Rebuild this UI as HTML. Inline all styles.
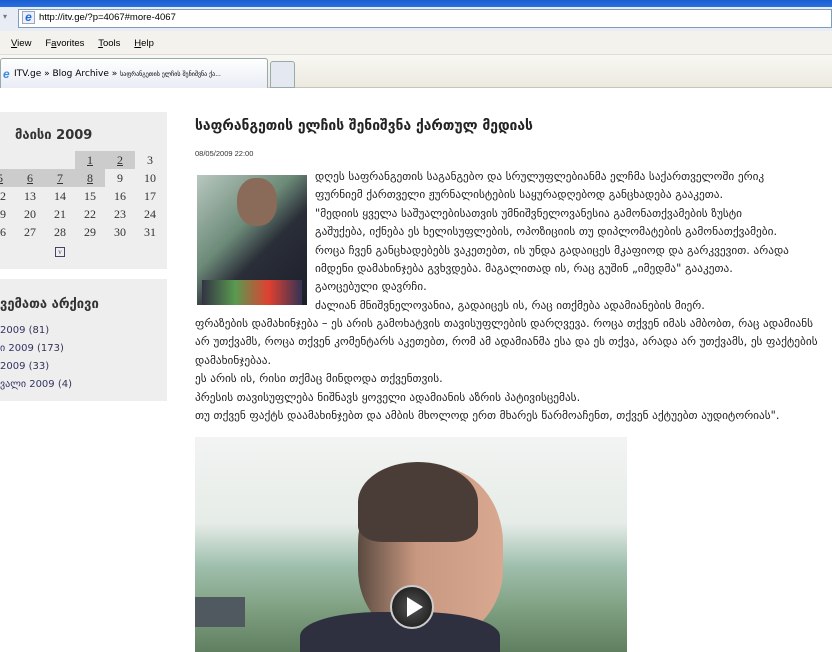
<!DOCTYPE html>
<html><head><meta charset="utf-8"><style>
*{margin:0;padding:0;box-sizing:border-box}
body{width:832px;height:652px;overflow:hidden;background:#fff;font-family:"Liberation Sans","DejaVu Sans",sans-serif;position:relative}
.abs{position:absolute}
.geo{font-family:"DejaVu Sans",sans-serif}
.cal td{width:30px;height:18px;text-align:center;font-family:"Liberation Serif",serif;font-size:12px;color:#333}
.cal td.g{background:#ccc}
.cal u{color:#333}
.p{font-size:11.3px;color:#222;line-height:18.4px;white-space:nowrap}
</style></head><body>
<div class="abs" style="left:0;top:0;width:832px;height:7px;background:linear-gradient(#1a5fd0,#2a6ee0)"></div>
<div class="abs" style="left:0;top:7px;width:832px;height:24px;background:#e8ecf4"></div>
<div class="abs" style="left:18px;top:9px;width:814px;height:19px;background:#fff;border:1px solid #7f9db9"></div>
<div class="abs" style="left:3px;top:12px;font-size:8px;color:#777">▾</div>
<div class="abs" style="left:22px;top:11px;width:13px;height:13px;border:1px solid #9ab;background:#eef"><div style="color:#1b6bd5;font-size:12px;font-weight:bold;line-height:11px;text-align:center;font-style:italic">e</div></div>
<div class="abs" style="left:39px;top:12px;font-size:9.5px;color:#000">http://itv.ge/?p=4067#more-4067</div>
<div class="abs" style="left:0;top:31px;width:832px;height:24px;background:#f3f2ec;border-bottom:1px solid #ddd"></div>
<div class="abs" style="left:11px;top:38px;font-size:9.5px;color:#000;word-spacing:2px"><u>V</u>iew &nbsp; F<u>a</u>vorites &nbsp; <u>T</u>ools &nbsp; <u>H</u>elp</div>
<div class="abs" style="left:0;top:55px;width:832px;height:33px;background:linear-gradient(#f8f7f2,#eceae0);border-bottom:1px solid #c8c6bb"></div>
<div class="abs" style="left:0;top:58px;width:268px;height:30px;background:linear-gradient(#fff,#e9ecf4);border:1px solid #9aa;border-bottom:none;border-radius:3px 3px 0 0"></div>
<div class="abs" style="left:3px;top:67px;color:#3d8be0;font-size:12px;font-weight:bold;font-style:italic">e</div>
<div class="abs geo" style="left:14px;top:69px;font-size:9px;color:#000;white-space:nowrap">ITV.ge » Blog Archive » <span style="font-size:6px">საფრანგეთის ელჩის შენიშვნა ქა...</span></div>
<div class="abs" style="left:270px;top:61px;width:25px;height:27px;background:#e4e8f0;border:1px solid #9aa;border-radius:3px 3px 0 0"></div>

<div class="abs" style="left:0;top:112px;width:167px;height:157px;background:#eeeeee"></div>
<div class="abs geo" style="left:15px;top:128px;font-size:13px;font-weight:bold;color:#333">მაისი 2009</div>
<table class="cal abs" style="left:-15px;top:151px;border-collapse:collapse">
<tr><td></td><td></td><td></td><td class="g"><u>1</u></td><td class="g"><u>2</u></td><td>3</td></tr>
<tr><td class="g"><u>5</u></td><td class="g"><u>6</u></td><td class="g"><u>7</u></td><td class="g"><u>8</u></td><td>9</td><td>10</td></tr>
<tr><td>12</td><td>13</td><td>14</td><td>15</td><td>16</td><td>17</td></tr>
<tr><td>19</td><td>20</td><td>21</td><td>22</td><td>23</td><td>24</td></tr>
<tr><td>26</td><td>27</td><td>28</td><td>29</td><td>30</td><td>31</td></tr>
<tr><td></td><td></td><td><span style="display:inline-block;width:10px;height:10px;border:1px solid #446;font-size:7px;line-height:8px;color:#446">v</span></td><td></td><td></td><td></td></tr>
</table>
<div class="abs" style="left:0;top:279px;width:167px;height:122px;background:#eeeeee"></div>
<div class="abs geo" style="left:0;top:297px;font-size:13px;font-weight:bold;color:#333;white-space:nowrap">ვემათა არქივი</div>
<div class="abs geo" style="left:0;top:322px;font-size:10px;line-height:18px;color:#335;white-space:nowrap"><span style="color:#336">2009</span> (81)<br><span style="color:#336">ი 2009</span> (173)<br><span style="color:#336">2009</span> (33)<br><span style="color:#336">ვალი 2009</span> (4)</div>

<div class="abs geo" style="left:195px;top:118px;font-size:13.9px;font-weight:bold;color:#222;white-space:nowrap">საფრანგეთის ელჩის შენიშვნა ქართულ მედიას</div>
<div class="abs" style="left:195px;top:149px;font-size:7.5px;color:#333">08/05/2009 22:00</div>
<div class="abs" style="left:197px;top:175px;width:110px;height:130px;background:linear-gradient(135deg,#b8c8c0,#6c8a78 40%,#2a2e38 60%,#1c1f28);overflow:hidden">
<div style="position:absolute;left:40px;top:3px;width:40px;height:48px;border-radius:45%;background:#8a6a58"></div>
<div style="position:absolute;left:5px;top:105px;width:100px;height:25px;background:linear-gradient(90deg,#334,#5a9a50,#e04030,#335)"></div></div>
<div class="abs geo p" style="left:315px;top:168px">დღეს საფრანგეთის საგანგებო და სრულუფლებიანმა ელჩმა საქართველოში ერიკ<br>ფურნიემ ქართველი ჟურნალისტების საყურადღებოდ განცხადება გააკეთა.<br>"მედიის ყველა საშუალებისათვის უმნიშვნელოვანესია გამონათქვამების ზუსტი<br>გაშუქება, იქნება ეს ხელისუფლების, ოპოზიციის თუ დიპლომატების გამონათქვამები.<br>როცა ჩვენ განცხადებებს ვაკეთებთ, ის უნდა გადაიცეს მკაფიოდ და გარკვევით. არადა<br>იმდენი დამახინჯება გვხვდება. მაგალითად ის, რაც გუშინ „იმედმა" გააკეთა.<br>გაოცებული დავრჩი.<br>ძალიან მნიშვნელოვანია, გადაიცეს ის, რაც ითქმება ადამიანების მიერ.</div>
<div class="abs geo p" style="left:195px;top:315px">ფრაზების დამახინჯება – ეს არის გამოხატვის თავისუფლების დარღვევა. როცა თქვენ იმას ამბობთ, რაც ადამიანს<br>არ უთქვამს, როცა თქვენ კომენტარს აკეთებთ, რომ ამ ადამიანმა ესა და ეს თქვა, არადა არ უთქვამს, ეს ფაქტების<br>დამახინჯებაა.<br>ეს არის ის, რისი თქმაც მინდოდა თქვენთვის.<br>პრესის თავისუფლება ნიშნავს ყოველი ადამიანის აზრის პატივისცემას.<br>თუ თქვენ ფაქტს დაამახინჯებთ და ამბის მხოლოდ ერთ მხარეს წარმოაჩენთ, თქვენ აქტუებთ აუდიტორიას".</div>

<div class="abs" style="left:195px;top:437px;width:432px;height:215px;background:linear-gradient(180deg,#f2f4f2 0%,#e6ece8 40%,#9fbfae 60%,#7fa080 80%,#5f7f60 100%);overflow:hidden">
<div style="position:absolute;left:163px;top:30px;width:145px;height:170px;border-radius:45% 45% 40% 40%;background:linear-gradient(90deg,#5a4a40,#c89880 40%,#d8a890)"></div>
<div style="position:absolute;left:163px;top:25px;width:120px;height:80px;border-radius:50% 50% 20% 20%;background:#4a3c36"></div>
<div style="position:absolute;left:105px;top:175px;width:200px;height:60px;border-radius:40% 40% 0 0;background:#2e3040"></div>
<div style="position:absolute;left:0;top:160px;width:50px;height:30px;background:#505860"></div>
<div style="position:absolute;left:195px;top:148px;width:44px;height:44px;border-radius:50%;background:radial-gradient(#555,#111);border:2px solid #ccc"></div>
<div style="position:absolute;left:212px;top:160px;width:0;height:0;border-left:16px solid #fff;border-top:10px solid transparent;border-bottom:10px solid transparent"></div>
</div>
</body></html>
